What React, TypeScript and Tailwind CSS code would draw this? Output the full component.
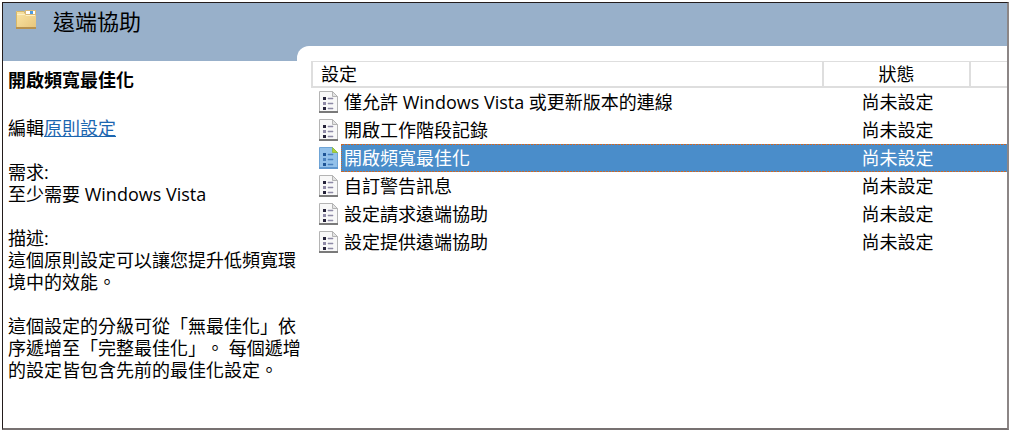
import clsx from 'clsx';

interface Policy {
  name: string;
  state: string;
  selected?: boolean;
}

const policies: Policy[] = [
  { name: '僅允許 Windows Vista 或更新版本的連線', state: '尚未設定' },
  { name: '開啟工作階段記錄', state: '尚未設定' },
  { name: '開啟頻寬最佳化', state: '尚未設定', selected: true },
  { name: '自訂警告訊息', state: '尚未設定' },
  { name: '設定請求遠端協助', state: '尚未設定' },
  { name: '設定提供遠端協助', state: '尚未設定' },
];

// focus marks run along the top and bottom edge of the selected row
const focusRow =
  'bg-[#4a8dca] bg-[image:repeating-linear-gradient(90deg,#c8682c_0_2px,#4a8dca_2px_3px),repeating-linear-gradient(90deg,#c8682c_0_2px,#4a8dca_2px_3px)] bg-[position:left_top,left_bottom] bg-[size:100%_1px] bg-no-repeat text-white';

function FolderIcon() {
  return (
    <svg width="20" height="20" viewBox="0 0 20 20" aria-hidden="true">
      <defs>
        <linearGradient id="folder" x1="0" y1="0" x2="1" y2="1">
          <stop offset="0" stopColor="#fbe6a6" />
          <stop offset="1" stopColor="#e6c47a" />
        </linearGradient>
      </defs>
      <path d="M0 1h8l1 2h11v16H0z" fill="url(#folder)" />
      <path d="M0.5 18V1.5H8l1 2" fill="none" stroke="#d8b868" />
      <rect x="9" y="0" width="11" height="5" fill="#d9b878" />
      <rect x="10" y="1" width="9" height="3" fill="#fff" />
      <rect x="14" y="1" width="3" height="3" fill="#4a9be0" />
      <path d="M1 4.5h8l1 1h9" fill="none" stroke="#fff0c2" />
      <rect x="0" y="17" width="20" height="2" fill="#b8924f" />
    </svg>
  );
}

function PolicyIcon({ selected }: { selected?: boolean }) {
  const edge = selected ? '#6fa4d6' : '#b4b4b4';
  const bullet = selected ? '#1f5596' : '#26233a';
  const line = selected ? '#4a80bd' : '#8f8aa6';
  return (
    <svg width="19" height="22" viewBox="0 0 19 22" aria-hidden="true">
      <path d="M0.5 0.5h13l5 5v16H0.5z" fill={selected ? '#93c1ea' : '#f8f8f8'} stroke={edge} />
      <path d="M13.5 0.5v5h5z" fill={selected ? '#b4d334' : '#e4e4e4'} stroke={selected ? '#8fbf4a' : edge} />
      <path d="M0 21h19" stroke={selected ? '#5f97cf' : '#7a7a7a'} strokeWidth="2" />
      <path d="M4 6h3v3H4zM4 16h3v3H4z" fill={bullet} />
      <path d="M4 11h3v3H4z" fill={line} />
      <path d="M9 7h5v1H9zM9 12h5v1H9zM9 17h5v1H9z" fill={line} stroke={line} strokeWidth="0.5" />
    </svg>
  );
}

function Sidebar() {
  return (
    <aside className="w-[308px] shrink-0 whitespace-nowrap pt-2 pl-[5px] leading-[22px]">
      <h2 className="mb-[26px] font-bold">開啟頻寬最佳化</h2>
      <div className="flex flex-col gap-[22px]">
        <p>
          編輯
          <a href="#policy" className="text-[#1c66b0] underline">原則設定</a>
        </p>
        <p>
          需求:
          <br />
          至少需要 Windows Vista
        </p>
        <p>
          描述:
          <br />
          這個原則設定可以讓您提升低頻寬環
          <br />
          境中的效能。
        </p>
        <p>
          這個設定的分級可從「無最佳化」依
          <br />
          序遞增至「完整最佳化」。 每個遞增
          <br />
          的設定皆包含先前的最佳化設定。
        </p>
      </div>
    </aside>
  );
}

function PolicyTable() {
  return (
    <table className="w-full table-fixed border-separate border-spacing-0 leading-6">
      <colgroup>
        <col className="w-[30px]" />
        <col />
        <col className="w-[147px]" />
        <col className="w-9" />
      </colgroup>
      <thead>
        <tr className="h-[27px] [&>th]:border-t [&>th]:border-b-2 [&>th]:border-[#dedede] [&>th]:p-0 [&>th]:font-normal">
          <th colSpan={2} scope="col" className="border-x-2 text-left">
            <span className="pl-2">設定</span>
          </th>
          <th scope="col" className="border-r-2 text-center">狀態</th>
          <th aria-hidden="true" />
        </tr>
      </thead>
      <tbody>
        {policies.map(({ name, state, selected }) => {
          const cell = selected ? focusRow : '';
          return (
            <tr key={name} className="h-7" aria-selected={selected}>
              <td className="p-0 pl-2">
                <div className="flex">
                  <PolicyIcon selected={selected} />
                </div>
              </td>
              <td className={clsx('p-0', cell, selected ? 'border-l border-dotted border-[#c8682c] pl-0.5' : 'pl-[3px]')}>
                {name}
              </td>
              <td className={clsx('p-0 text-center', cell)}>{state}</td>
              <td className={clsx('p-0', cell)} />
            </tr>
          );
        })}
      </tbody>
    </table>
  );
}

export default function App() {
  return (
    <div
      lang="zh-Hant"
      className="flex min-h-screen flex-col bg-white pt-0.5 pr-[3px] pb-1 pl-0.5 font-['Open_Sans','Noto_Sans_CJK_TC',sans-serif] text-lg text-black [text-spacing-trim:space-all]"
    >
      <div className="flex flex-1 flex-col border border-r-2 border-b-2 border-[#231c1c] border-r-[#8c8686] border-b-[#777171]">
        <header className="bg-[#98b0ca]">
          <div className="flex h-[43px] items-start gap-[17px] pt-[7px] pl-[13px]">
            <FolderIcon />
            <h1 className="text-[22px] leading-[22px]">遠端協助</h1>
          </div>
          <div className="ml-[294px] h-[15px] rounded-tl-xl bg-white" />
        </header>
        <div className="flex flex-1">
          <Sidebar />
          <main className="min-w-0 flex-1">
            <PolicyTable />
          </main>
        </div>
      </div>
    </div>
  );
}
